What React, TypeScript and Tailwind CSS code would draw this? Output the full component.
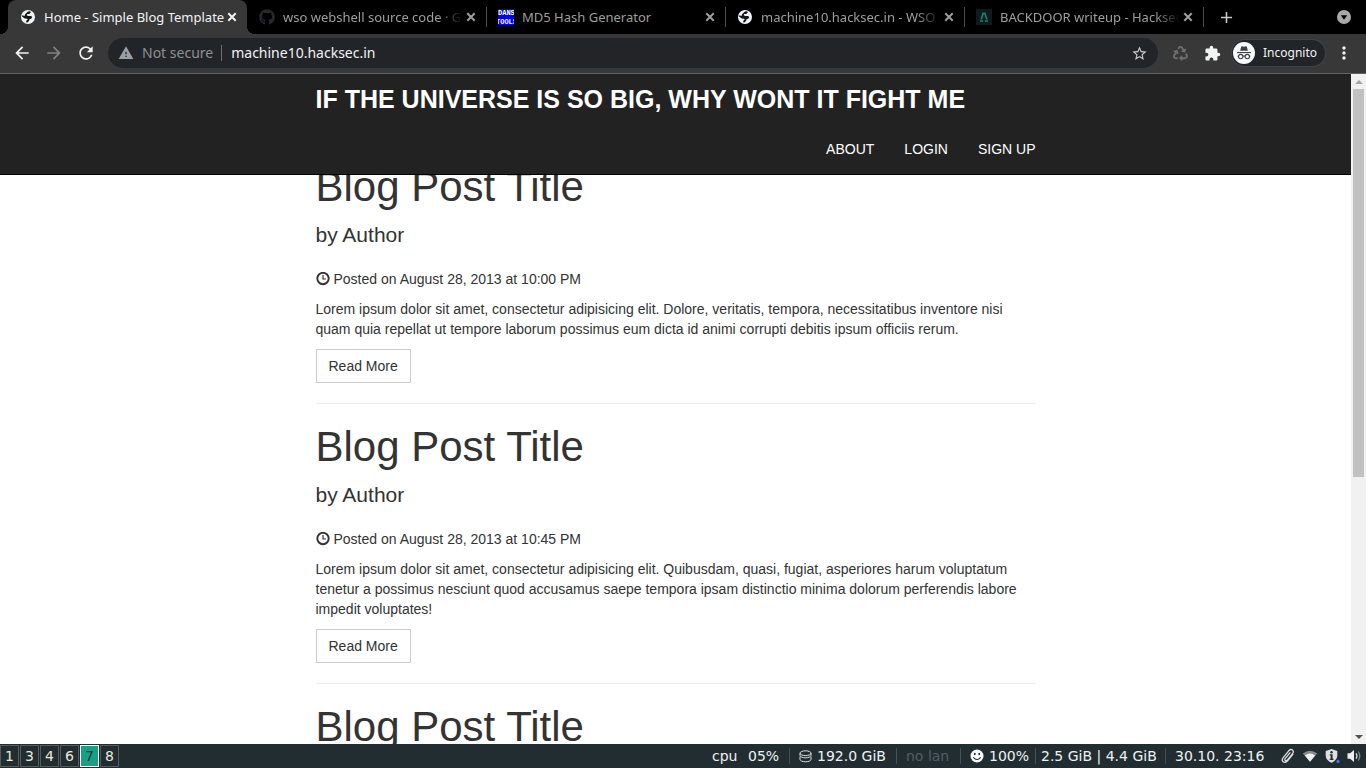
import React from "react";
import {
  MdArrowBack,
  MdArrowForward,
  MdRefresh,
  MdWarning,
  MdStarBorder,
  MdExtension,
  MdMoreVert,
  MdAdd,
} from "react-icons/md";
import { FaGithub, FaRecycle } from "react-icons/fa";

function GlobeIcon() {
  return (
    <svg viewBox="0 0 16 16" className="size-4" aria-hidden="true">
      <circle cx="8" cy="8" r="7" fill="#f1f3f4" />
      <path
        d="M8 2.500 10.200 2.300 10.800 3.600 9.200 4.900 7.200 5 6.700 6.300 8.300 7 11 6.900 12.300 8 11.200 9.700 9.600 10.200 9 12 7.400 13.600 6 13.200 6.500 11.600 7.800 10.600 7 9.700 4.800 9.500 2 7.400 2.400 6.200 4.500 7 5.300 4.900Z"
        fill="#161616"
      />
    </svg>
  );
}

function DansToolsIcon() {
  return (
    <svg viewBox="0 0 16 16" className="size-4 overflow-hidden" aria-hidden="true">
      <rect width="16" height="16" fill="#0000f5" />
      <text x="0" y="6" fontSize="7" fontWeight="700" fontFamily="Liberation Mono, monospace" fill="#fff">DANS</text>
      <text x="-2" y="15" fontSize="7" fontWeight="700" fontFamily="Liberation Mono, monospace" fill="#fff">TOOLS</text>
    </svg>
  );
}

function HacksecIcon() {
  return (
    <svg viewBox="0 0 16 16" className="size-4" aria-hidden="true">
      <rect width="16" height="16" fill="#101820" />
      <path d="M7.400 3.500 5.200 10.500M8.600 3.500 10.900 10.500" stroke="#0c8a68" strokeWidth="1.700" fill="none" />
      <path d="M4 12h3M9 12h3" stroke="#0c8a68" strokeWidth="1.400" />
    </svg>
  );
}

function CloseIcon() {
  return (
    <svg viewBox="0 0 16 16" className="size-4" aria-hidden="true">
      <path d="M4.300 4.300 11.700 11.700M11.700 4.300 4.300 11.700" stroke="currentColor" strokeWidth="2" fill="none" />
    </svg>
  );
}

function TabSearchIcon() {
  return (
    <svg viewBox="0 0 16 16" className="size-4" aria-hidden="true">
      <circle cx="8" cy="8" r="7" fill="#a9a9a9" />
      <path d="M4.800 6.300h6.400L8 10.800Z" fill="#000" />
    </svg>
  );
}

function IncognitoIcon() {
  return (
    <svg viewBox="0 0 22 22" className="size-[22px]" aria-hidden="true">
      <circle cx="11" cy="11" r="11" fill="#f8f9fa" />
      <path d="M7.1 8.7 8.2 4.8q.2-.6.8-.5l2 .5 2-.5q.6-.1.8.5l1.1 3.9Z" fill="#3c4043" />
      <path d="M4 10h14v1.1H4Z" fill="#3c4043" />
      <g fill="none" stroke="#3c4043" strokeWidth="1.1">
        <circle cx="7.7" cy="14.6" r="2.2" />
        <circle cx="14.3" cy="14.6" r="2.2" />
        <path d="M9.9 14.3q1.1-.7 2.2 0M5.5 14.2H4.6M16.5 14.2h.9" />
      </g>
    </svg>
  );
}

function ClockIcon() {
  return (
    <svg viewBox="0 0 14 14" className="size-3.5 shrink-0" fill="none" stroke="#333" aria-hidden="true">
      <circle cx="7" cy="6.500" r="5.700" strokeWidth="1.900" />
      <path d="M7 3V7H10" strokeWidth="1.200" />
    </svg>
  );
}

function DiskIcon() {
  return (
    <svg viewBox="0 0 13 13" className="size-[13px]" fill="none" stroke="#dfe3e3" strokeWidth="1" aria-hidden="true">
      <ellipse cx="6.5" cy="3.2" rx="5.5" ry="2.4" />
      <path d="M1 3.2v2.2c0 1.3 2.5 2.4 5.5 2.4S12 6.700 12 5.400V3.200M1 6.600v2.800c0 1.300 2.500 2.400 5.500 2.400S12 10.700 12 9.400V6.600" />
    </svg>
  );
}

function SmileyIcon() {
  return (
    <svg viewBox="0 0 14 14" className="size-3.5" aria-hidden="true">
      <circle cx="7" cy="7" r="6.500" fill="#fff" />
      <ellipse cx="4.800" cy="5" rx=".9" ry="1.300" fill="#222d31" />
      <ellipse cx="9.200" cy="5" rx=".9" ry="1.300" fill="#222d31" />
      <path d="M3.300 8.300q3.700 4.500 7.400 0" fill="none" stroke="#222d31" strokeWidth="1.100" />
    </svg>
  );
}

function ClipIcon() {
  return (
    <svg viewBox="0 0 16 16" className="size-4" fill="none" stroke="#dfdfdf" strokeWidth="1.300" strokeLinecap="round" aria-hidden="true">
      <path d="M12.800 6.300 7.600 12.800C6.300 14.400 4.400 14.800 3.200 13.800S2.100 11 3.400 9.400L8.900 2.700C9.900 1.500 11.500 1.300 12.500 2.100s1.100 2.400.1 3.600L7.300 12.100C6.700 12.800 5.900 12.900 5.300 12.400s-.6-1.300 0-2L9.900 4.800" />
    </svg>
  );
}

function WifiIcon() {
  return (
    <svg viewBox="0 0 16 16" className="size-4" aria-hidden="true">
      <path d="M.8 5.500Q8-.2 15.200 5.500L8 13.800Z" fill="#858b8d" />
      <path d="M2.900 7.400Q8 3.400 13.100 7.400L8 13.800Z" fill="#efefef" />
    </svg>
  );
}

function ShieldIcon() {
  return (
    <svg viewBox="0 0 16 16" className="size-4" aria-hidden="true">
      <path d="M7.500 1 13.300 3v4.500c0 3.400-2.600 5.800-5.800 7.200C4.300 13.300 1.700 10.900 1.700 7.500V3Z" fill="#dfdfdf" />
      <circle cx="7.500" cy="4.200" r="1.200" fill="#222d31" />
      <path d="M5.800 6.200h2.800v4.500h.9v1.200H5.700v-1.200h.9V7.400h-.8Z" fill="#222d31" />
      <circle cx="14" cy="13.400" r="1.600" fill="#3584e4" />
    </svg>
  );
}

function SpeakerIcon() {
  return (
    <svg viewBox="0 0 16 16" className="size-4" aria-hidden="true">
      <path d="M1.500 5.300h2.600L8 2v12l-3.900-3.300H1.500Z" fill="#efefef" />
      <path d="M10 5.400q2 2.600 0 5.200" fill="none" stroke="#dfdfdf" strokeWidth="1.200" />
      <path d="M12.200 3.500q3.200 4.500 0 9" fill="none" stroke="#858b8d" strokeWidth="1.200" />
    </svg>
  );
}

const tabs = [
  { title: "Home - Simple Blog Template", icon: <GlobeIcon />, active: true, fade: false },
  { title: "wso webshell source code · Gi", icon: <FaGithub className="size-4 text-[#24292e]" />, active: false, fade: true },
  { title: "MD5 Hash Generator", icon: <DansToolsIcon />, active: false, fade: false },
  { title: "machine10.hacksec.in - WSO 2", icon: <GlobeIcon />, active: false, fade: true },
  { title: "BACKDOOR writeup - Hacksec", icon: <HacksecIcon />, active: false, fade: true },
];

function TabStrip() {
  return (
    <div className="flex h-[34px] items-center bg-black pl-2 pr-2.5">
      {tabs.map((tab) => (
        <div
          key={tab.title}
          className={
            tab.active
              ? "relative flex h-full w-[239px] min-w-0 items-center rounded-t-lg bg-[#383838] pl-3 pr-[7px] text-[#f1f3f4]"
              : "relative flex h-full w-[239px] min-w-0 items-center pl-3 pr-[7px] text-[#9e9e9e]"
          }
        >
          {tab.active ? (
            <>
              <span className="absolute bottom-0 -left-2 size-2 bg-[radial-gradient(circle_at_0_0,#000_8px,#383838_8px)]" />
              <span className="absolute bottom-0 -right-2 size-2 bg-[radial-gradient(circle_at_100%_0,#000_8px,#383838_8px)]" />
            </>
          ) : (
            <span className="absolute -right-px top-[7px] h-5 w-px bg-[#4c4c4c]" />
          )}
          <span className="shrink-0">{tab.icon}</span>
          <span
            className={
              tab.fade
                ? "ml-2 min-w-0 flex-1 overflow-hidden whitespace-nowrap text-[13px] leading-5 [mask-image:linear-gradient(to_right,#000_155px,transparent_180px)]"
                : "ml-2 min-w-0 flex-1 overflow-hidden whitespace-nowrap text-[13px] leading-5"
            }
          >
            {tab.title}
          </span>
          <button type="button" aria-label={"Close " + tab.title} className="size-4 shrink-0">
            <CloseIcon />
          </button>
        </div>
      ))}
      <button type="button" aria-label="New tab" className="ml-[11px] flex size-6 items-center justify-center text-[#c8c8c8]">
        <MdAdd className="size-[19px]" />
      </button>
      <button type="button" aria-label="Search tabs" className="ml-auto flex size-6 items-center justify-center">
        <TabSearchIcon />
      </button>
    </div>
  );
}

function Toolbar() {
  return (
    <div className="flex h-10 items-center border-b border-[#616161] bg-[#383838] px-1.5 pb-px">
      <button type="button" aria-label="Back" className="flex w-8 justify-center text-[#f1f3f4]">
        <MdArrowBack className="size-5" />
      </button>
      <button type="button" aria-label="Forward" className="flex w-8 justify-center text-[#838383]">
        <MdArrowForward className="size-5" />
      </button>
      <button type="button" aria-label="Reload" className="flex w-8 justify-center text-[#f1f3f4]">
        <MdRefresh className="size-5" />
      </button>
      <div className="mx-1.5 flex h-[30px] min-w-0 flex-1 items-center rounded-full bg-[#222428] px-2.5 text-sm">
        <MdWarning className="size-4 shrink-0 text-[#9aa0a6]" />
        <span className="ml-2 whitespace-nowrap text-[#8b9196]">Not secure</span>
        <span className="ml-2 h-4 w-px bg-[#6b6e72]" />
        <input
          aria-label="Address"
          defaultValue="machine10.hacksec.in"
          className="ml-[9px] min-w-0 flex-1 bg-transparent text-[#f1f3f4] outline-none"
        />
        <button type="button" aria-label="Bookmark this page" className="text-[#c8cacc]">
          <MdStarBorder className="size-[17px]" />
        </button>
      </div>
      <button type="button" aria-label="Recycle" className="flex w-8 justify-center text-[#6e6e6e]">
        <FaRecycle className="size-[15px]" />
      </button>
      <button type="button" aria-label="Extensions" className="flex w-8 justify-center text-[#f1f3f4]">
        <MdExtension className="size-[17px]" />
      </button>
      <button
        type="button"
        className="ml-1 mr-[3px] flex h-[26px] items-center gap-2 rounded-full bg-[#222428] pl-px pr-2 text-xs text-[#f1f3f4] ring-1 ring-[#404246]"
      >
        <IncognitoIcon />
        Incognito
      </button>
      <button type="button" aria-label="Menu" className="flex w-8 justify-center text-[#f1f3f4]">
        <MdMoreVert className="size-5" />
      </button>
    </div>
  );
}

const posts = [
  {
    id: 1,
    date: "Posted on August 28, 2013 at 10:00 PM",
    text: "Lorem ipsum dolor sit amet, consectetur adipisicing elit. Dolore, veritatis, tempora, necessitatibus inventore nisi quam quia repellat ut tempore laborum possimus eum dicta id animi corrupti debitis ipsum officiis rerum.",
  },
  {
    id: 2,
    date: "Posted on August 28, 2013 at 10:45 PM",
    text: "Lorem ipsum dolor sit amet, consectetur adipisicing elit. Quibusdam, quasi, fugiat, asperiores harum voluptatum tenetur a possimus nesciunt quod accusamus saepe tempora ipsam distinctio minima dolorum perferendis labore impedit voluptates!",
  },
];

function PostTitle() {
  return <h1 className="text-[42px] leading-[46px]">Blog Post Title</h1>;
}

function BlogPage() {
  return (
    <div className="relative min-w-0 flex-1 overflow-hidden bg-white font-['Liberation_Sans',Arial,sans-serif] text-sm leading-5 text-[#333]">
      <header className="absolute inset-x-0 top-0 z-10 border-b border-black bg-[#222] text-white">
        <div className="mx-auto max-w-[720px]">
          <a href="#home" className="flex h-[50px] items-center text-[25px] font-bold leading-5">
            IF THE UNIVERSE IS SO BIG, WHY WONT IT FIGHT ME
          </a>
          <nav className="flex h-[50px] items-center justify-end gap-[30px]">
            <a href="#about">ABOUT</a>
            <a href="#login">LOGIN</a>
            <a href="#signup">SIGN UP</a>
          </nav>
        </div>
      </header>
      <main className="mx-auto max-w-[720px] pt-[90px]">
        {posts.map((post) => (
          <article key={post.id} className="mb-5 border-b border-[#eee] pb-5">
            <PostTitle />
            <p className="mt-2.5 text-[21px] leading-[29px]">by Author</p>
            <p className="mt-5 flex items-center gap-1">
              <ClockIcon />
              {post.date}
            </p>
            <p className="mt-2.5">{post.text}</p>
            <a href="#post" className="mt-2.5 inline-flex h-[34px] items-center border border-[#ccc] px-3">
              Read More
            </a>
          </article>
        ))}
        <article>
          <PostTitle />
        </article>
      </main>
    </div>
  );
}

function Scrollbar() {
  return (
    <div className="flex w-[15px] shrink-0 flex-col items-center bg-[#f1f1f1]" aria-hidden="true">
      <div className="flex h-[15px] items-center">
        <svg viewBox="0 0 8 4" className="h-1 w-2">
          <path d="M0 4 4 0 8 4Z" fill="#a3a3a3" />
        </svg>
      </div>
      <div className="flex w-[11px] flex-1 flex-col">
        <div className="grow-[97] bg-[#c1c1c1]" />
        <div className="grow-[63]" />
      </div>
      <div className="flex h-[15px] items-center">
        <svg viewBox="0 0 8 4" className="h-1 w-2">
          <path d="M0 0 4 4 8 0Z" fill="#505050" />
        </svg>
      </div>
    </div>
  );
}

function Separator() {
  return <span className="h-4 w-px shrink-0 bg-[#4a5052]" />;
}

function StatusBar() {
  return (
    <footer className="flex h-6 shrink-0 items-center justify-between bg-[#222d31] pr-1 font-['DejaVu_Sans',sans-serif] text-sm leading-5 text-[#f0f2f2]">
      <div className="flex gap-px">
        {["1", "3", "4", "6", "7", "8"].map((n) => (
          <button
            type="button"
            key={n}
            className={
              n === "7"
                ? "flex h-[22px] w-[19px] items-center justify-center border border-white bg-[#16a085] text-[#222d31]"
                : "flex h-[22px] w-[19px] items-center justify-center border border-[#595b5b] text-[#eee8d5]"
            }
          >
            {n}
          </button>
        ))}
      </div>
      <div className="flex items-center whitespace-nowrap">
        <span className="w-9">cpu</span>
        <span className="w-[41px]">05%</span>
        <Separator />
        <span className="flex w-[106px] items-center gap-[5px] pl-[9px]">
          <DiskIcon />
          192.0 GiB
        </span>
        <Separator />
        <span className="w-[63px] pl-[9px] text-[#4f5f65]">no lan</span>
        <Separator />
        <span className="flex w-[74px] items-center gap-[5px] pl-[9px]">
          <SmileyIcon />
          100%
        </span>
        <Separator />
        <span className="w-[129px] pl-[5px]">2.5 GiB | 4.4 GiB</span>
        <Separator />
        <span className="w-[114px] pl-[9px]">30.10. 23:16</span>
        <span className="flex gap-1.5">
          <ClipIcon />
          <WifiIcon />
          <ShieldIcon />
          <SpeakerIcon />
        </span>
      </div>
    </footer>
  );
}

export default function App() {
  return (
    <div className="flex h-screen flex-col overflow-hidden bg-black">
      <div className="shrink-0 font-['Noto_Sans',sans-serif]">
        <TabStrip />
        <Toolbar />
      </div>
      <div className="flex min-h-0 flex-1">
        <BlogPage />
        <Scrollbar />
      </div>
      <StatusBar />
    </div>
  );
}
